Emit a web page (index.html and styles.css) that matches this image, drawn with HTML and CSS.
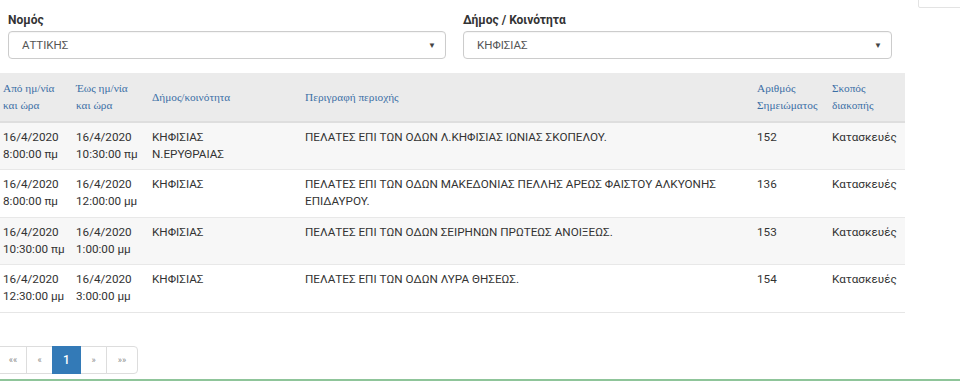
FILE: index.html
```html
<!DOCTYPE html>
<html lang="el">
<head>
<meta charset="utf-8">
<title>Διακοπές</title>
<link rel="stylesheet" href="styles.css">
</head>
<body>
<div class="corner-box"></div>
<div class="filters">
  <div class="field field-nomos">
    <label class="field-label">Νομός</label>
    <div class="select">
      <span class="select-value">ΑΤΤΙΚΗΣ</span>
      <span class="select-arrow">▼</span>
    </div>
  </div>
  <div class="field field-dimos">
    <label class="field-label">Δήμος / Κοινότητα</label>
    <div class="select">
      <span class="select-value">ΚΗΦΙΣΙΑΣ</span>
      <span class="select-arrow">▼</span>
    </div>
  </div>
</div>

<table class="grid">
  <colgroup>
    <col class="c1"><col class="c2"><col class="c3"><col class="c4"><col class="c5"><col class="c6">
  </colgroup>
  <thead>
    <tr>
      <th>Από ημ/νία<br>και ώρα</th>
      <th>Έως ημ/νία<br>και ώρα</th>
      <th>Δήμος/κοινότητα</th>
      <th>Περιγραφή περιοχής</th>
      <th>Αριθμός<br>Σημειώματος</th>
      <th>Σκοπός<br>διακοπής</th>
    </tr>
  </thead>
  <tbody>
    <tr>
      <td>16/4/2020<br>8:00:00 πμ</td>
      <td>16/4/2020<br>10:30:00 πμ</td>
      <td>ΚΗΦΙΣΙΑΣ<br>Ν.ΕΡΥΘΡΑΙΑΣ</td>
      <td>ΠΕΛΑΤΕΣ ΕΠΙ ΤΩΝ ΟΔΩΝ Λ.ΚΗΦΙΣΙΑΣ ΙΩΝΙΑΣ ΣΚΟΠΕΛΟΥ.</td>
      <td>152</td>
      <td>Κατασκευές</td>
    </tr>
    <tr>
      <td>16/4/2020<br>8:00:00 πμ</td>
      <td>16/4/2020<br>12:00:00 μμ</td>
      <td>ΚΗΦΙΣΙΑΣ</td>
      <td>ΠΕΛΑΤΕΣ ΕΠΙ ΤΩΝ ΟΔΩΝ ΜΑΚΕΔΟΝΙΑΣ ΠΕΛΛΗΣ ΑΡΕΩΣ ΦΑΙΣΤΟΥ ΑΛΚΥΟΝΗΣ<br>ΕΠΙΔΑΥΡΟΥ.</td>
      <td>136</td>
      <td>Κατασκευές</td>
    </tr>
    <tr>
      <td>16/4/2020<br>10:30:00 πμ</td>
      <td>16/4/2020<br>1:00:00 μμ</td>
      <td>ΚΗΦΙΣΙΑΣ</td>
      <td>ΠΕΛΑΤΕΣ ΕΠΙ ΤΩΝ ΟΔΩΝ ΣΕΙΡΗΝΩΝ ΠΡΩΤΕΩΣ ΑΝΟΙΞΕΩΣ.</td>
      <td>153</td>
      <td>Κατασκευές</td>
    </tr>
    <tr>
      <td>16/4/2020<br>12:30:00 μμ</td>
      <td>16/4/2020<br>3:00:00 μμ</td>
      <td>ΚΗΦΙΣΙΑΣ</td>
      <td>ΠΕΛΑΤΕΣ ΕΠΙ ΤΩΝ ΟΔΩΝ ΛΥΡΑ ΘΗΣΕΩΣ.</td>
      <td>154</td>
      <td>Κατασκευές</td>
    </tr>
  </tbody>
</table>

<nav class="pager">
  <a class="page p-first">««</a>
  <a class="page p-prev">«</a>
  <a class="page active">1</a>
  <a class="page p-next">»</a>
  <a class="page p-last">»»</a>
</nav>

<div class="footer-line"></div>
</body>
</html>
```

FILE: styles.css
```css
* { box-sizing: border-box; }

html, body {
  margin: 0;
  padding: 0;
  background: #fff;
  font-family: Roboto, "Open Sans", "Liberation Sans", sans-serif;
  font-size: 12px;
  color: #333;
  height: 381px;
  overflow: hidden;
}

body { position: relative; }

.corner-box {
  position: absolute;
  top: -4px;
  left: 918px;
  width: 60px;
  height: 12px;
  border: 1px solid #e3e3e3;
  border-radius: 2px;
  background: #fff;
}

.filters {
  display: flex;
  padding: 13px 0 0 8px;
  gap: 17px;
}

.field-nomos { width: 438px; }
.field-dimos { width: 429px; }

.field-label {
  display: block;
  font-weight: bold;
  font-size: 12px;
  line-height: 14px;
  color: #333;
  margin-bottom: 4px;
}

.select {
  display: flex;
  align-items: center;
  justify-content: space-between;
  height: 28px;
  border: 1px solid #ccc;
  border-radius: 4px;
  padding: 0 9px 0 13px;
  box-shadow: inset 0 1px 1px rgba(0,0,0,0.04);
}

.select-value {
  font-size: 11.5px;
  color: #555;
}

.select-arrow {
  font-size: 8px;
  color: #444;
}

.grid {
  margin-top: 14px;
  width: 905px;
  border-collapse: collapse;
  table-layout: fixed;
  border-bottom: 1px solid #e6e6e6;
}

.c1 { width: 73px; }
.c2 { width: 76px; }
.c3 { width: 153px; }
.c4 { width: 452px; }
.c5 { width: 75px; }
.c6 { width: 76px; }

.grid thead tr {
  background: #ebebeb;
}

.grid th {
  font-family: "Liberation Serif", "DejaVu Serif", serif;
  font-weight: normal;
  font-size: 11.3px;
  line-height: 17px;
  color: #3b6fa6;
  text-align: left;
  vertical-align: middle;
  padding: 7px 3px 7px 3px;
  height: 49px;
  border-bottom: 2px solid #dedede;
}

.grid td {
  font-size: 11.7px;
  line-height: 17px;
  color: #333;
  vertical-align: top;
  padding: 6px 3px 5px 3px;
  height: 47.5px;
  border-top: 1px solid #e8e8e8;
}

.grid tbody tr:nth-child(odd) { background: #f7f7f7; }
.grid tbody tr:nth-child(even) { background: #fff; }

.pager {
  display: flex;
  margin: 33px 0 0 0;
  width: max-content;
}

.page {
  display: flex;
  align-items: center;
  justify-content: center;
  height: 28px;
  border: 1px solid #ddd;
  margin-left: -1px;
  font-size: 9px;
  color: #8a8a8a;
  background: #fff;
}

.p-first { width: 28px; margin-left: -1px; }
.p-prev { width: 27px; }
.p-next { width: 27px; }
.p-last { width: 32px; border-radius: 0 4px 4px 0; }

.page.active {
  width: 29px;
  background: #337ab7;
  border-color: #337ab7;
  color: #fff;
  font-size: 12px;
  font-weight: 500;
  position: relative;
}

.footer-line {
  position: absolute;
  left: 0;
  right: 0;
  top: 379px;
  height: 2px;
  background: #8fc59a;
}
```
